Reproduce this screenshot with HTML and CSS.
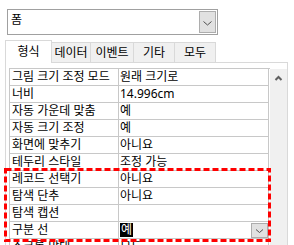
FILE: index.html
```html
<!DOCTYPE html>
<html lang="ko">
<head>
  <meta charset="UTF-8">
  <title>속성 시트</title>
  <link rel="stylesheet" href="styles.css">
</head>
<body>
  <div class="combo">
    <span class="combo-text">폼</span>
    <span class="drop">
      <svg width="15" height="20" viewBox="0 0 15 20"><path d="M3.5 9.5 L7.5 13 L11.5 9.5" fill="none" stroke="#505050" stroke-width="1"/></svg>
    </span>
  </div>

  <div class="tabs">
    <div class="tab active t1">형식</div>
    <div class="tab t2">데이터</div>
    <div class="tab t3">이벤트</div>
    <div class="tab t4">기타</div>
    <div class="tab t5">모두</div>
  </div>

  <div class="panel">
    <div class="props">
      <div class="label">그림 크기 조정 모드</div><div class="value">원래 크기로</div>
      <div class="label">너비</div><div class="value">14.996cm</div>
      <div class="label">자동 가운데 맞춤</div><div class="value">예</div>
      <div class="label">자동 크기 조정</div><div class="value">예</div>
      <div class="label">화면에 맞추기</div><div class="value">아니요</div>
      <div class="label">테두리 스타일</div><div class="value">조정 가능</div>
      <div class="label">레코드 선택기</div><div class="value">아니요</div>
      <div class="label">탐색 단추</div><div class="value">아니요</div>
      <div class="label">탐색 캡션</div><div class="value"></div>
      <div class="label">구분 선</div>
      <div class="value">
        <span class="selected">예</span>
        <span class="cell-drop">
          <svg width="15" height="13" viewBox="0 0 15 13"><path d="M4 5.5 L7.5 8.5 L11 5.5" fill="none" stroke="#505050" stroke-width="1"/></svg>
        </span>
      </div>
      <div class="label">스크롤 막대</div><div class="value">모두</div>
    </div>
    <div class="scroll">
      <svg width="17" height="17" viewBox="0 0 17 17"><path d="M5.5 11 L8.5 8 L11.5 11" fill="none" stroke="#606060" stroke-width="2"/></svg>
    </div>
  </div>

  <svg class="mark" width="267" height="74" viewBox="0 0 267 74">
    <rect x="1.5" y="1.5" width="264" height="71" fill="none" stroke="#ff0000" stroke-width="3" stroke-dasharray="6 3"/>
  </svg>
</body>
</html>
```

FILE: styles.css
```css
body {
  margin: 0;
  width: 294px;
  height: 245px;
  overflow: hidden;
  position: relative;
  background: #fff;
  color: #000;
  font-family: "Noto Sans", "Noto Sans CJK KR", sans-serif;
  font-size: 12px;
}
.combo {
  display: flex;
  box-sizing: border-box;
  width: 211px;
  height: 26px;
  margin: 9px 0 0 7px;
  border: 1px solid #a0a0a0;
}
.combo-text {
  flex: 1;
  padding: 2px 3px;
  line-height: 16px;
}
.drop {
  box-sizing: border-box;
  width: 17px;
  height: 22px;
  margin: 1px;
  background: #e1e1e1;
  border: 1px solid #adadad;
}
.drop svg {
  display: block;
}
.tabs {
  display: flex;
  align-items: flex-end;
  height: 22px;
  margin: 5px 0 0 5px;
}
.tab {
  box-sizing: border-box;
  height: 20px;
  line-height: 19px;
  text-align: center;
  background: #f0f0f0;
  border: 1px solid #d9d9d9;
  border-bottom: none;
  margin-left: -1px;
}
.tab.active {
  position: relative;
  z-index: 1;
  height: 23px;
  margin-bottom: -1px;
  margin-left: 0;
  line-height: 21px;
  background: #fff;
}
.t1 { width: 47px; }
.t2 { width: 40px; }
.t3 { width: 44px; }
.t4 { width: 42px; }
.t5 { width: 42px; }
.panel {
  display: flex;
  box-sizing: border-box;
  width: 283px;
  height: 200px;
  margin-left: 5px;
  padding: 5px 0 0 3px;
  border: 1px solid #d9d9d9;
}
.props {
  display: grid;
  grid-template-columns: 109px 150px;
  grid-auto-rows: 17px;
  align-content: start;
  width: 260px;
  border-top: 1px solid #c8c8c8;
  border-left: 1px solid #c8c8c8;
}
.label, .value {
  box-sizing: border-box;
  height: 17px;
  line-height: 16px;
  white-space: nowrap;
  overflow: hidden;
  border-right: 1px solid #c8c8c8;
  border-bottom: 1px solid #c8c8c8;
}
.label {
  padding-left: 2px;
}
.value {
  display: flex;
  align-items: center;
  padding-left: 1px;
}
.selected {
  display: inline-block;
  height: 14px;
  line-height: 14px;
  padding: 0 1px;
  background: #000;
  color: #fff;
}
.cell-drop {
  align-self: flex-end;
  box-sizing: border-box;
  width: 17px;
  height: 15px;
  margin-left: auto;
  background: #e1e1e1;
  border: 1px solid #adadad;
}
.cell-drop svg {
  display: block;
}
.scroll {
  width: 17px;
  margin-top: 1px;
  background: #f0f0f0;
}
.scroll svg {
  display: block;
}
.mark {
  position: absolute;
  left: 4px;
  top: 168px;
}
```
